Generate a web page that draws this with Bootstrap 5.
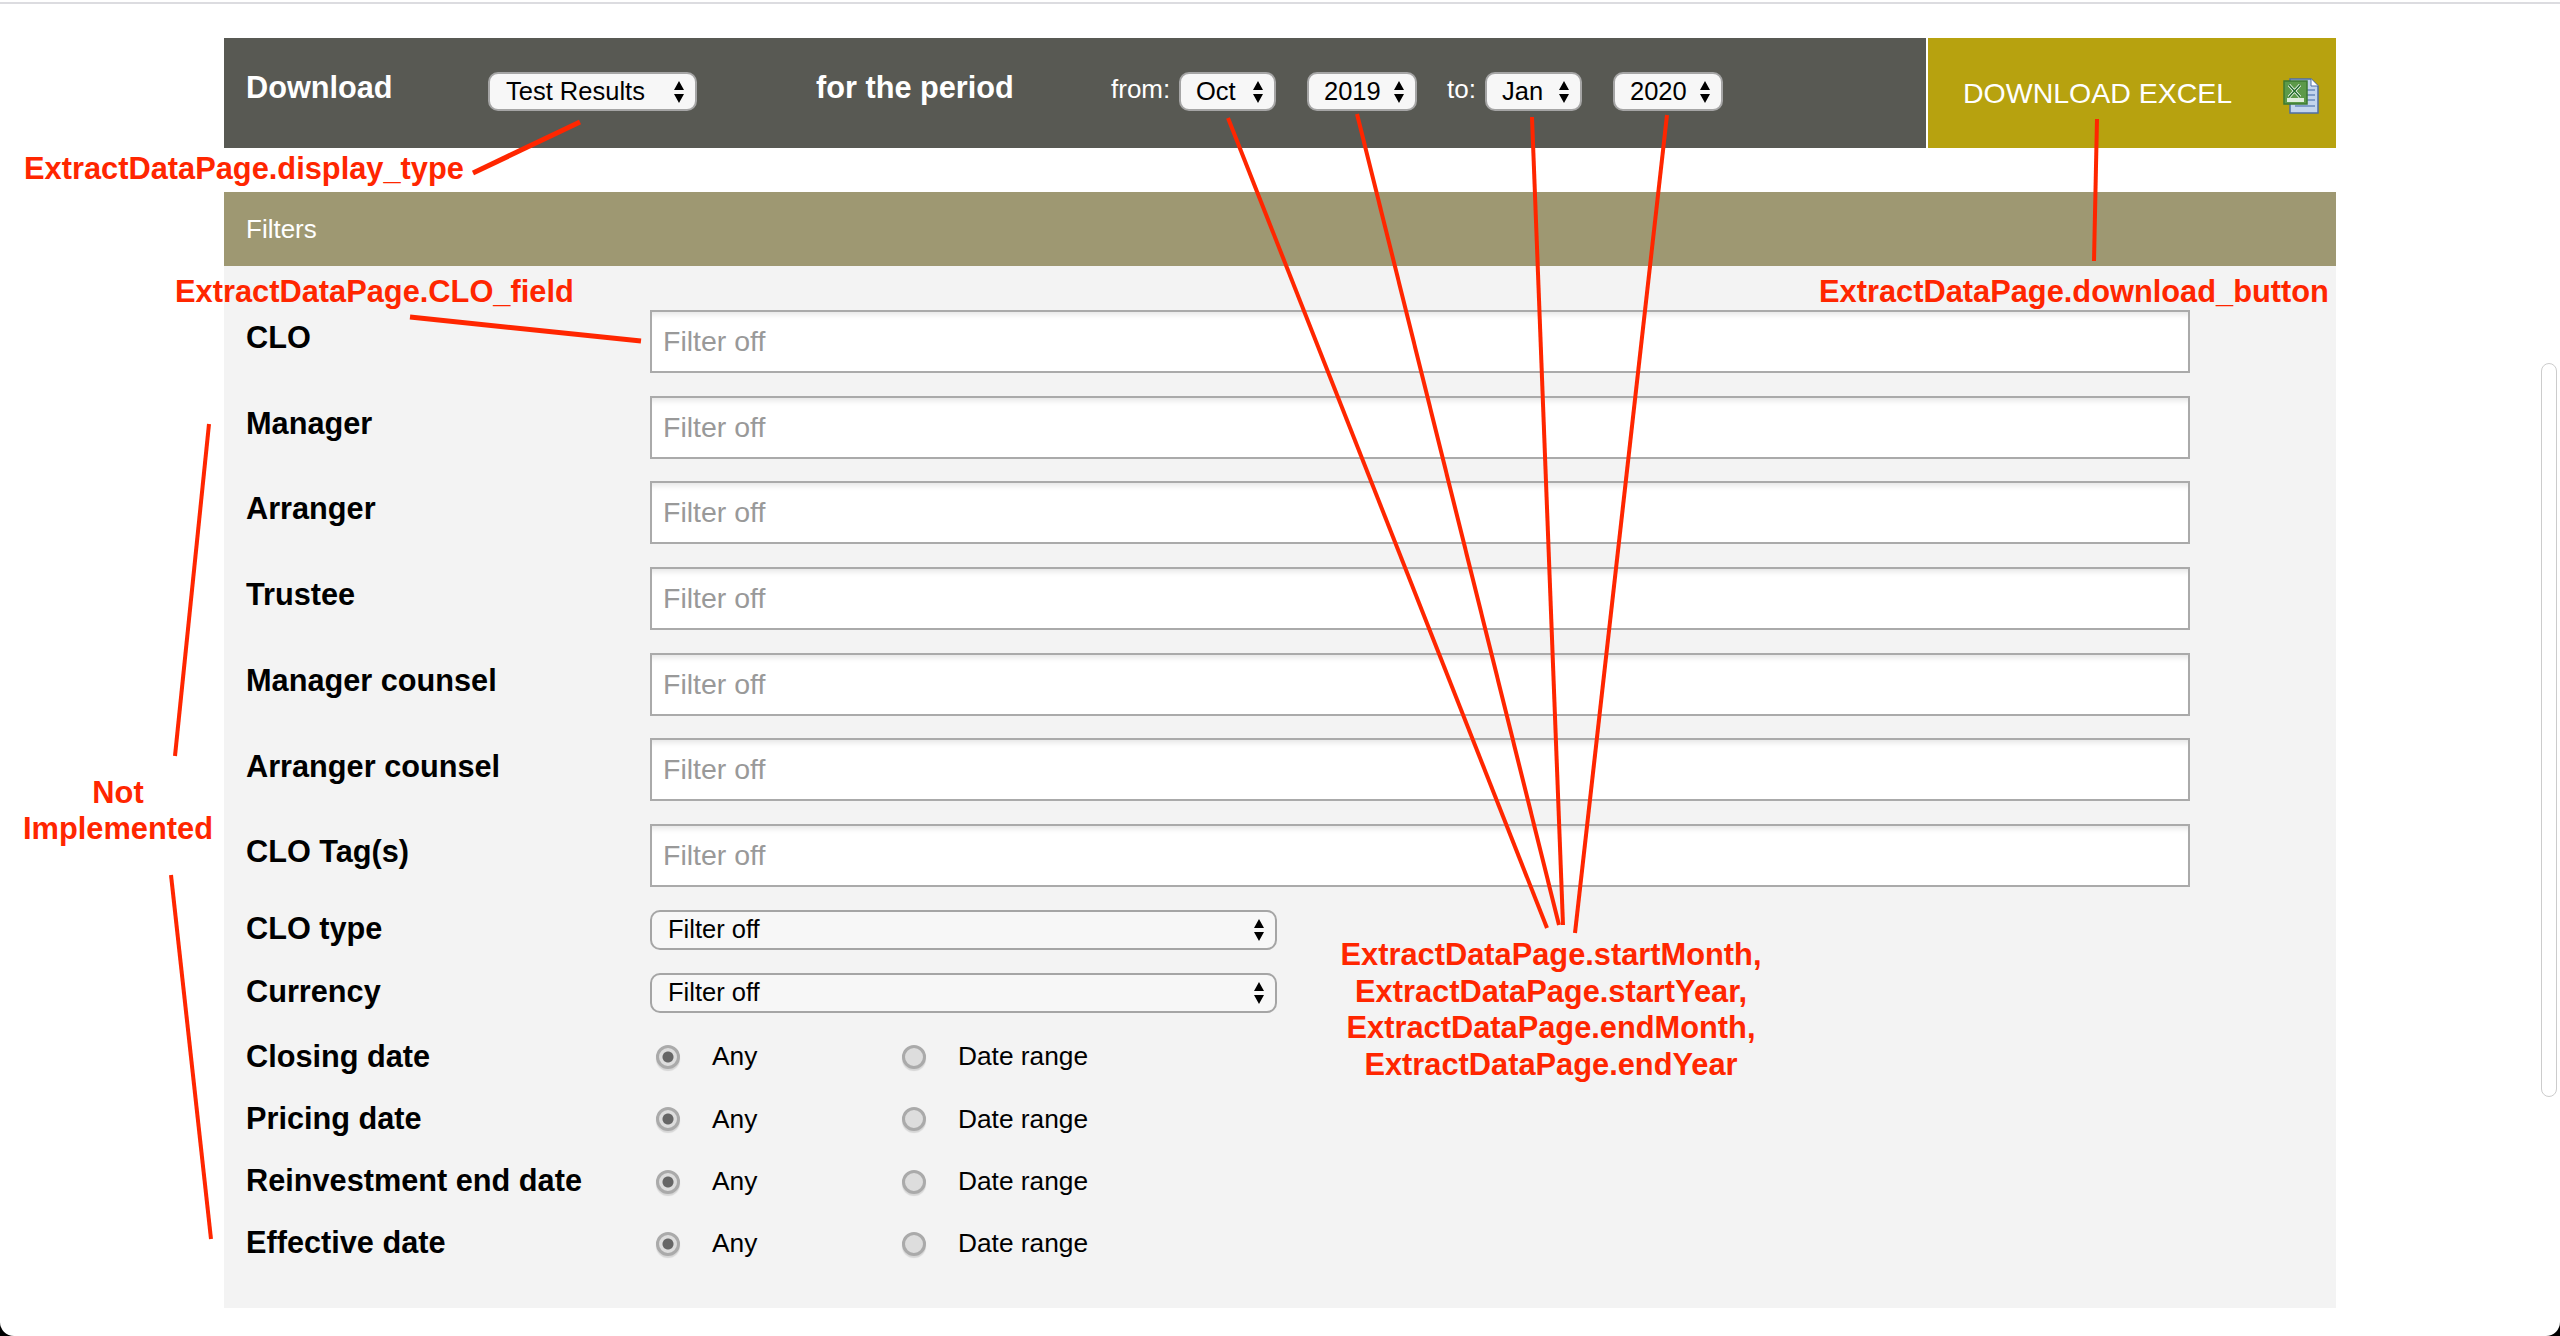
<!DOCTYPE html>
<html lang="en">
  <head>
    <meta charset="utf-8" />
    <title>Extract data</title>

    <link href="https://cdn.jsdelivr.net/npm/bootstrap@5.3.0/dist/css/bootstrap.min.css" rel="stylesheet">
    <style>
      html, body { height: 100%; }
      body { margin: 0; background: #000; font-family: "Liberation Sans", Arial, sans-serif; color: #000; overflow: hidden; }

      /* page surface, with the window's rounded bottom corners */
      .page-sheet { position: relative; height: 1336px; background: #fff; border-radius: 0 0 14px 14px; overflow: hidden; padding: 38px 224px 0; }
      .top-hairline { position: absolute; left: 0; right: 0; top: 2px; height: 2px; background: #dcdce0; }
      .scroll-track { position: absolute; left: 2541px; top: 363px; width: 16px; height: 734px; border: 1px solid #ccc; border-radius: 8px; }

      /* download bar */
      .dl-bar { height: 110px; gap: 2px; }
      .dl-dark { width: 1702px; background: #585953; color: #fff; padding-left: 22px; }
      .dl-title { font-size: 30.7px; font-weight: 700; margin-bottom: 10px; }
      .dl-title-a { width: 242px; }
      .dl-title-b { width: 295px; margin-left: 119px; }
      .dl-word { font-size: 26px; margin-bottom: 8px; }
      .dl-word-from { width: 68px; }
      .dl-word-to { width: 38px; margin-left: 30px; }
      .dl-gold { flex: 1; height: 110px; background: #b7a20f; color: #fff; font-size: 28.5px; border: 0; border-radius: 0; padding: 0 17px 0 35px; }
      .dl-gold:hover, .dl-gold:active { background: #b7a20f !important; color: #fff !important; }
      .dl-gold svg { margin-top: 6px; }

      /* mac style selects */
      .mac-select { width: auto; height: 39px; font-size: 25.5px; line-height: 1; color: #000; background-color: #f7f7f7; border: 2px solid #a5a5a5; border-radius: 10px; padding: 0 30px 0 16px;
        background-image: url("data:image/svg+xml,%3Csvg xmlns='http://www.w3.org/2000/svg' viewBox='0 0 12 22'%3E%3Cpath d='M6 0l5 9H1zM6 22l5-9H1z'/%3E%3C/svg%3E");
        background-size: 12px 22px; background-position: right 10px center; }
      .dl-dark .mac-select { margin-bottom: 3px; }
      .sel-type { width: 209px; }
      .sel-month { width: 97px; padding-left: 15px; }
      .sel-year { width: 110px; padding-left: 15px; }
      .dl-dark .gap-after { margin-right: 31px; }
      .sel-wide { width: 627px; height: 40px; }

      /* filters */
      .filters-head { height: 74px; margin-top: 44px; background: #9e9872; color: #fff; font-size: 26px; padding-left: 22px; }
      .filters-body { height: 1042px; background: #f3f3f3; padding: 44px 0 0 22px; }
      .filter-name { width: 404px; font-size: 30.7px; font-weight: 700; line-height: 1.2; }
      .text-row { height: 63px; margin-bottom: 22.7px; }
      .text-row .filter-name { margin-bottom: 6px; }
      .filter-text { width: 1540px; height: 63px; font-size: 28.5px; border: 2px solid #aaa; border-radius: 0; padding: 0 11px; box-shadow: inset 0 7px 6px -5px rgba(0, 0, 0, .12); }
      .filter-text::placeholder { color: #999; opacity: 1; }
      .select-row { height: 40px; margin-bottom: 23px; }
      .select-row .filter-name { margin-bottom: 1px; }
      .radio-row { height: 62.3px; }
      .first-radio-row { margin-top: -10px; }
      .radio-pair { width: 252px; padding-left: 6px; font-size: 26.3px; }
      .radio-pair + .radio-pair { padding-left: 0; }
      .radio-pair label { margin-left: 32px; }
      .date-radio.form-check-input[type=radio] { width: 24px; height: 24px; margin: 0; border: 3px solid #aaa; background-color: #ddd; box-shadow: 0 2px 1px rgba(0, 0, 0, .12); flex: none; }
      .date-radio.form-check-input:checked[type=radio] { border-color: #aaa; background-color: #ddd; background-image: radial-gradient(circle, #666 0, #666 5px, #ddd 6px); }

      /* red notes drawn on the screenshot */
      .note-lines { position: absolute; left: 0; top: 0; pointer-events: none; }
      .note-lines line { stroke: #ff2600; stroke-width: 4; }
      .note-lines .thick-line { stroke-width: 5; }
      .note { position: absolute; color: #ff2600; font-size: 30.8px; font-weight: 700; line-height: 36px; white-space: nowrap; }
      .note-type { left: 24px; top: 151px; }
      .note-clo { left: 175px; top: 274px; }
      .note-btn { left: 1819px; top: 274px; }
      .note-missing { left: 18px; top: 775px; width: 200px; text-align: center; }
      .note-period { left: 1301px; top: 937px; width: 500px; text-align: center; line-height: 36.5px; }
    </style>
  </head>
  <body>
    <div class="page-sheet">
      <div class="top-hairline"></div>

      <div class="d-flex dl-bar">
        <div class="d-flex align-items-center dl-dark">
          <div class="dl-title dl-title-a">Download</div>
          <select class="form-select mac-select sel-type"><option>Test Results</option></select>
          <div class="dl-title dl-title-b">for the period</div>
          <div class="dl-word dl-word-from">from:</div>
          <select class="form-select mac-select sel-month gap-after"><option>Oct</option></select>
          <select class="form-select mac-select sel-year"><option>2019</option></select>
          <div class="dl-word dl-word-to">to:</div>
          <select class="form-select mac-select sel-month gap-after"><option>Jan</option></select>
          <select class="form-select mac-select sel-year"><option>2020</option></select>
        </div>
        <button type="button" class="btn dl-gold d-flex align-items-center justify-content-between">
          <span>DOWNLOAD EXCEL</span>
          <svg width="36" height="36" viewBox="0 0 36 36">
            <path d="M7 1h21l7 7v27H7z" fill="#c3d5ee" stroke="#4f6fa5" stroke-width="1.5"/>
            <path d="M28 1v7h7" fill="#fff" stroke="#4f6fa5"/>
            <path d="M24 12h8M24 17h8M24 22h8M12 28h20" stroke="#7f9cc9" stroke-width="2"/>
            <rect x="1" y="3" width="23" height="23" fill="#5c9a4a" stroke="#3d7a33" stroke-width="1.5"/>
            <rect x="4" y="20" width="17" height="4" fill="#dfeedd"/>
            <path d="M6 7l11 12M17 7L6 19" stroke="#fff" stroke-width="3"/>
            <path d="M6 7l11 12M17 7L6 19" stroke="#1f6a2a" stroke-width="1.5"/>
          </svg>
        </button>
      </div>

      <div class="filters-head d-flex align-items-center">Filters</div>
      <div class="filters-body">
        <div class="d-flex align-items-center text-row">
          <div class="filter-name">CLO</div>
          <input type="text" class="form-control filter-text" placeholder="Filter off">
        </div>
        <div class="d-flex align-items-center text-row">
          <div class="filter-name">Manager</div>
          <input type="text" class="form-control filter-text" placeholder="Filter off">
        </div>
        <div class="d-flex align-items-center text-row">
          <div class="filter-name">Arranger</div>
          <input type="text" class="form-control filter-text" placeholder="Filter off">
        </div>
        <div class="d-flex align-items-center text-row">
          <div class="filter-name">Trustee</div>
          <input type="text" class="form-control filter-text" placeholder="Filter off">
        </div>
        <div class="d-flex align-items-center text-row">
          <div class="filter-name">Manager counsel</div>
          <input type="text" class="form-control filter-text" placeholder="Filter off">
        </div>
        <div class="d-flex align-items-center text-row">
          <div class="filter-name">Arranger counsel</div>
          <input type="text" class="form-control filter-text" placeholder="Filter off">
        </div>
        <div class="d-flex align-items-center text-row">
          <div class="filter-name">CLO Tag(s)</div>
          <input type="text" class="form-control filter-text" placeholder="Filter off">
        </div>

        <div class="d-flex align-items-center select-row">
          <div class="filter-name">CLO type</div>
          <select class="form-select mac-select sel-wide"><option>Filter off</option></select>
        </div>
        <div class="d-flex align-items-center select-row">
          <div class="filter-name">Currency</div>
          <select class="form-select mac-select sel-wide"><option>Filter off</option></select>
        </div>

        <div class="d-flex align-items-center radio-row first-radio-row">
          <div class="filter-name">Closing date</div>
          <div class="d-flex align-items-center radio-pair"><input class="form-check-input date-radio" type="radio" name="closing" id="closingAny" checked><label for="closingAny">Any</label></div>
          <div class="d-flex align-items-center radio-pair"><input class="form-check-input date-radio" type="radio" name="closing" id="closingRange"><label for="closingRange">Date range</label></div>
        </div>
        <div class="d-flex align-items-center radio-row">
          <div class="filter-name">Pricing date</div>
          <div class="d-flex align-items-center radio-pair"><input class="form-check-input date-radio" type="radio" name="pricing" id="pricingAny" checked><label for="pricingAny">Any</label></div>
          <div class="d-flex align-items-center radio-pair"><input class="form-check-input date-radio" type="radio" name="pricing" id="pricingRange"><label for="pricingRange">Date range</label></div>
        </div>
        <div class="d-flex align-items-center radio-row">
          <div class="filter-name">Reinvestment end date</div>
          <div class="d-flex align-items-center radio-pair"><input class="form-check-input date-radio" type="radio" name="reinvest" id="reinvestAny" checked><label for="reinvestAny">Any</label></div>
          <div class="d-flex align-items-center radio-pair"><input class="form-check-input date-radio" type="radio" name="reinvest" id="reinvestRange"><label for="reinvestRange">Date range</label></div>
        </div>
        <div class="d-flex align-items-center radio-row">
          <div class="filter-name">Effective date</div>
          <div class="d-flex align-items-center radio-pair"><input class="form-check-input date-radio" type="radio" name="effective" id="effectiveAny" checked><label for="effectiveAny">Any</label></div>
          <div class="d-flex align-items-center radio-pair"><input class="form-check-input date-radio" type="radio" name="effective" id="effectiveRange"><label for="effectiveRange">Date range</label></div>
        </div>
      </div>

      <div class="scroll-track"></div>

      <!-- annotations lying over the screenshot -->
      <svg class="note-lines" width="2560" height="1336">
        <line class="thick-line" x1="473" y1="173" x2="580" y2="122"/>
        <line class="thick-line" x1="410" y1="317" x2="641" y2="341"/>
        <line x1="1228" y1="118" x2="1547" y2="928"/>
        <line x1="1357" y1="114" x2="1559" y2="925"/>
        <line x1="1532" y1="117" x2="1563" y2="925"/>
        <line x1="1667" y1="115" x2="1575" y2="933"/>
        <line x1="2097" y1="119" x2="2094" y2="261"/>
        <line x1="209" y1="424" x2="175" y2="756"/>
        <line x1="171" y1="875" x2="211" y2="1239"/>
      </svg>
      <div class="note note-type">ExtractDataPage.display_type</div>
      <div class="note note-clo">ExtractDataPage.CLO_field</div>
      <div class="note note-btn">ExtractDataPage.download_button</div>
      <div class="note note-missing">Not<br>Implemented</div>
      <div class="note note-period">ExtractDataPage.startMonth,<br>ExtractDataPage.startYear,<br>ExtractDataPage.endMonth,<br>ExtractDataPage.endYear</div>
    </div>

    <script src="https://cdn.jsdelivr.net/npm/bootstrap@5.3.0/dist/js/bootstrap.bundle.min.js"></script>
  </body>
</html>
